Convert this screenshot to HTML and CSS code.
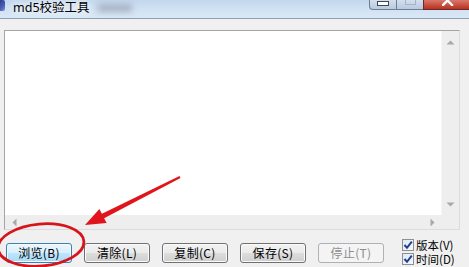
FILE: index.html
```html
<!DOCTYPE html>
<html lang="zh-CN">
<head>
<meta charset="utf-8">
<title>md5校验工具</title>
<link rel="stylesheet" href="styles.css">
</head>
<body>
<div class="window">
  <div class="titlebar">
    <div class="appicon"></div>
    <span class="title">md5校验工具</span>
    <span class="blurred"></span>
    <div class="controls">
      <div class="ctl min"><span class="min-glyph"></span></div>
      <div class="ctl max"><span class="max-glyph"></span></div>
      <div class="ctl close">
        <svg width="12" height="6" viewBox="0 0 12 6"><path d="M1 -4 L10 5 M10 -4 L1 5" stroke="#fff" stroke-width="2.4" stroke-linecap="square"/></svg>
      </div>
    </div>
  </div>
  <div class="client">
    <div class="editor">
      <div class="content"></div>
      <div class="vscroll">
        <svg class="arrow" width="9" height="5" viewBox="0 0 9 5"><path d="M0.5 4.5 L4.5 0.5 L8.5 4.5 Z" fill="#a8a8a8"/></svg>
        <svg class="arrow" width="9" height="5" viewBox="0 0 9 5"><path d="M0.5 0.5 L4.5 4.5 L8.5 0.5 Z" fill="#a8a8a8"/></svg>
      </div>
      <div class="hscroll">
        <svg class="arrow" width="5" height="9" viewBox="0 0 5 9"><path d="M4.5 0.5 L0.5 4.5 L4.5 8.5 Z" fill="#a8a8a8"/></svg>
        <svg class="arrow" width="5" height="9" viewBox="0 0 5 9"><path d="M0.5 0.5 L4.5 4.5 L0.5 8.5 Z" fill="#a8a8a8"/></svg>
      </div>
      <div class="corner"></div>
    </div>
    <div class="actions">
      <div class="buttons">
        <button class="btn focus">浏览(B)</button>
        <button class="btn">清除(L)</button>
        <button class="btn">复制(C)</button>
        <button class="btn">保存(S)</button>
        <button class="btn" disabled>停止(T)</button>
      </div>
      <div class="checks">
        <label class="check"><span class="box"><svg width="10" height="10" viewBox="0 0 10 10"><path d="M1.5 5 L4 7.8 L8.8 1.6" fill="none" stroke="#1f3f8f" stroke-width="2"/></svg></span><span class="label">版本(V)</span></label>
        <label class="check"><span class="box"><svg width="10" height="10" viewBox="0 0 10 10"><path d="M1.5 5 L4 7.8 L8.8 1.6" fill="none" stroke="#1f3f8f" stroke-width="2"/></svg></span><span class="label">时间(D)</span></label>
      </div>
    </div>
  </div>
  <svg class="annotation" width="469" height="267" viewBox="0 0 469 267">
    <ellipse cx="41" cy="245" rx="43" ry="21" transform="rotate(-5 41 245)" fill="none" stroke="#d8141b" stroke-width="2.8"/>
    <polygon points="85,225 106.6,223.1 104.1,218.2 180.45,177.9 179.55,176.1 101.9,213.8 99.4,208.9" fill="#e0141b"/>
  </svg>
</div>
</body>
</html>
```
FILE: styles.css
```css
html, body {
  margin: 0;
  padding: 0;
  background: #f0f0f0;
}

.window {
  position: relative;
  width: 469px;
  height: 267px;
  overflow: hidden;
  background: #f0f0f0;
  font-family: "Noto Sans CJK SC", "Noto Sans", sans-serif;
  display: flex;
  flex-direction: column;
}

/* ---------- title bar ---------- */
.titlebar {
  height: 19px;
  flex: none;
  display: flex;
  align-items: flex-start;
  background: linear-gradient(#c2d7ee, #d3e3f4 60%, #dae8f6);
  border-bottom: 1px solid #8f9fb3;
  box-sizing: border-box;
}

.appicon {
  width: 5px;
  height: 11px;
  background: linear-gradient(135deg, #2b3f8f, #4a5fb6 60%, #8a97d0);
  border-radius: 0 2px 2px 0;
}

.title {
  margin-left: 8px;
  font-size: 12.5px;
  line-height: 15px;
  color: #000;
  text-shadow: 0 0 6px #fff, 0 0 10px #fff;
  font-family: "Noto Sans", "Noto Sans CJK SC", sans-serif;
}

.blurred {
  width: 34px;
  height: 8px;
  margin-top: 4px;
  margin-left: 8px;
  background: #9aa4b4;
  filter: blur(3px);
  opacity: 0.75;
}

.controls {
  margin-left: auto;
  display: flex;
}

.ctl {
  height: 10px;
  box-sizing: border-box;
  display: flex;
  justify-content: center;
  align-items: flex-start;
}

.min, .max {
  width: 27px;
  background: linear-gradient(#d3dfec, #b9cadd);
  border: 1px solid #6e7e95;
  border-top: none;
}

.min {
  border-radius: 0 0 0 4px;
  border-right: none;
}

.max {
  border-right: none;
}

.min-glyph {
  width: 10px;
  height: 3px;
  margin-top: 1px;
  background: #fff;
  border: 1px solid #3c4656;
}

.max-glyph {
  width: 9px;
  height: 4px;
  border: 1px solid #a5b3c4;
  border-top: none;
}

.close {
  width: 46px;
  background: linear-gradient(#d9786b, #c54535 70%, #b93222);
  border: 1px solid #6b2a22;
  border-top: none;
  border-right: none;
  padding-left: 3px;
}

/* ---------- client ---------- */
.client {
  flex: 1;
  padding: 11px 9px 0 4px;
  display: flex;
  flex-direction: column;
}

.editor {
  height: 200px;
  box-sizing: border-box;
  border: 1px solid #a5a5a5;
  border-right-color: #dcdcdc;
  border-bottom-color: #dcdcdc;
  display: grid;
  grid-template-columns: 1fr 18px;
  grid-template-rows: 1fr 14px;
  background: #fff;
}

.content {
  background: #fff;
}

.vscroll {
  background: #eeeeee;
  border-left: 1px solid #f6f6f6;
  display: flex;
  flex-direction: column;
  justify-content: space-between;
  align-items: center;
  padding: 9px 0 8px;
}

.hscroll {
  background: #eeeeee;
  display: flex;
  justify-content: space-between;
  align-items: center;
  padding: 0 6px 0 7px;
}

.corner {
  background: #eeeeee;
}

.arrow {
  display: block;
}

/* ---------- actions ---------- */
.actions {
  margin-top: 9px;
  display: flex;
  align-items: flex-start;
}

.buttons {
  display: flex;
  gap: 12px;
  margin-left: 2px;
  margin-top: 4px;
}

.btn {
  width: 66px;
  height: 20px;
  box-sizing: border-box;
  padding: 0;
  font-family: "Noto Sans CJK SC", sans-serif;
  font-size: 12px;
  line-height: 16px;
  letter-spacing: 0.3px;
  color: #000;
  border: 1px solid #707070;
  border-radius: 3px;
  background: linear-gradient(#f2f2f2 0%, #ebebeb 50%, #dddddd 51%, #cfcfcf 100%);
  box-shadow: inset 0 0 0 1px #fbfbfb;
}

.btn.focus {
  border-color: #3c7fb1;
  background: linear-gradient(#eaf6fd 0%, #d9f0fc 50%, #bee6fd 51%, #a7d9f5 100%);
  box-shadow: inset 0 0 0 1px #f4fbff;
}

.btn:disabled {
  color: #8d8d8d;
  border-color: #adb2b5;
  background: #f4f4f4;
  box-shadow: none;
}

.checks {
  margin-left: 18px;
  display: flex;
  flex-direction: column;
  gap: 2px;
}

.check {
  display: flex;
  align-items: center;
  height: 12px;
  color: #000;
  white-space: nowrap;
}

.label {
  display: block;
  font-size: 11.5px;
  line-height: 12px;
  height: 12px;
  overflow: visible;
}

.box {
  width: 12px;
  height: 12px;
  box-sizing: border-box;
  border: 1px solid #8e8f8f;
  background: linear-gradient(135deg, #dfe9f5, #f5f8fc);
  display: flex;
  align-items: center;
  justify-content: center;
  margin-right: 2px;
  flex: none;
}

.box svg {
  display: block;
}

/* ---------- annotation overlay ---------- */
.annotation {
  position: absolute;
  left: 0;
  top: 0;
  pointer-events: none;
}
```
